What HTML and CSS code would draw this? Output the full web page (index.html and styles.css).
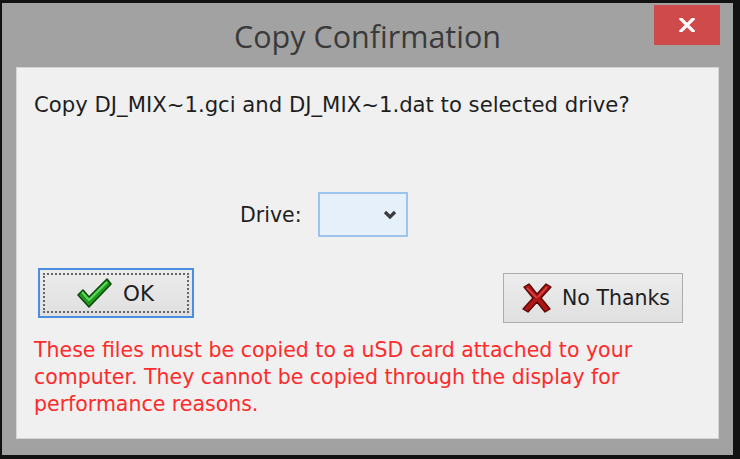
FILE: index.html
```html
<!DOCTYPE html>
<html lang="en">
<head>
    <meta charset="UTF-8">
    <meta name="viewport" content="width=device-width, initial-scale=1.0">
    <title>Copy Confirmation</title>
    <link rel="stylesheet" href="styles.css">
</head>
<body>
    <div class="window">
        <div class="title-bar">
            <div class="title">Copy Confirmation</div>
            <div class="close-btn">
                <svg width="16" height="14" viewBox="0 0 16 14">
                    <path d="M2 1 L14 13 M14 1 L2 13" stroke="#fff" stroke-width="3.2" stroke-linecap="square"/>
                </svg>
            </div>
        </div>

        <div class="panel">
            <p class="question">Copy DJ_MIX~1.gci and DJ_MIX~1.dat to selected drive?</p>

            <div class="drive-row">
                <label class="drive-label">Drive:</label>
                <div class="drive-select">
                    <svg width="14" height="10" viewBox="0 0 14 10">
                        <path d="M2 2 L7 7 L12 2" fill="none" stroke="#3a3a3a" stroke-width="3.2"/>
                    </svg>
                </div>
            </div>

            <div class="button-row">
                <button class="btn btn-ok">
                    <span class="focus-ring">
                        <svg class="icon" width="40" height="34" viewBox="0 0 38 34">
                            <path d="M3 19 L8 14 L14 21 L32 3 L36 8 L14 31 Z" fill="#1f9a1f" stroke="#0b4a0b" stroke-width="1.6" stroke-linejoin="round"/>
                            <path d="M7 16 L14 24 L32 6" fill="none" stroke="#5fd85f" stroke-width="2" stroke-linejoin="round"/>
                        </svg>
                        OK
                    </span>
                </button>
                <button class="btn btn-no">
                    <svg class="icon" width="32" height="30" viewBox="0 0 32 30">
                        <path d="M3 4 L8 1 L16 11 L25 1 L30 4 L20 15 L29 26 L24 29 L16 19 L7 29 L2 26 L12 15 Z" fill="#b01515" stroke="#5a0808" stroke-width="1.4" stroke-linejoin="round"/>
                        <path d="M6 5 L16 15 M26 4 L17 14" fill="none" stroke="#e04848" stroke-width="1.6"/>
                    </svg>
                    No Thanks
                </button>
            </div>

            <p class="warning">These files must be copied to a uSD card attached to your computer. They cannot be copied through the display for performance reasons.</p>
        </div>
    </div>
</body>
</html>
```

FILE: styles.css
```css
* {
    margin: 0;
    padding: 0;
    box-sizing: border-box;
}

body {
    background-color: #121212;
    width: 740px;
    height: 459px;
    overflow: hidden;
    font-family: 'DejaVu Sans', Verdana, sans-serif;
}

.window {
    margin: 3px 0 0 2px;
    width: 731px;
    height: 452px;
    background-color: #a2a2a2;
    padding: 0 14px 16px 14px;
    display: flex;
    flex-direction: column;
}

.title-bar {
    height: 64px;
    position: relative;
    display: flex;
    align-items: center;
    justify-content: center;
}

.title {
    font-family: 'Open Sans', 'Noto Sans', sans-serif;
    font-size: 30.5px;
    color: #3a3a3a;
    padding-top: 1px;
}

.close-btn {
    position: absolute;
    top: 2px;
    right: -1px;
    width: 66px;
    height: 40px;
    background-color: #cf4a4a;
    display: flex;
    align-items: center;
    justify-content: center;
}

.panel {
    flex: 1;
    background-color: #f0f0f0;
    border: 1px solid #d4d4d4;
    padding: 24px 0 0 17px;
    color: #1e1e1e;
}

.question {
    font-size: 21.2px;
    line-height: 25px;
}

.drive-row {
    display: flex;
    align-items: center;
    margin: 75px 0 0 206px;
}

.drive-label {
    font-size: 20.5px;
    margin-right: 16px;
}

.drive-select {
    width: 90px;
    height: 45px;
    border: 2px solid #9cc4ec;
    background-color: #e6f0fb;
    display: flex;
    align-items: center;
    justify-content: flex-end;
    padding-right: 9px;
}

.button-row {
    display: flex;
    justify-content: space-between;
    align-items: flex-start;
    margin: 31px 35px 0 4px;
}

.btn {
    font-family: 'DejaVu Sans', Verdana, sans-serif;
    font-size: 20.5px;
    color: #1e1e1e;
    background: linear-gradient(#ececec, #e0e0e0);
    display: flex;
    align-items: center;
}

.btn-ok {
    width: 156px;
    height: 50px;
    border: 2px solid #4a8ee0;
    padding: 3px;
}

.focus-ring {
    flex: 1;
    height: 100%;
    border: 2px dotted #666;
    display: flex;
    align-items: center;
    padding-left: 29px;
    gap: 9px;
    font-size: 21.5px;
}

.btn-no {
    width: 180px;
    height: 50px;
    margin-top: 5px;
    border: 1px solid #adadad;
    padding-left: 17px;
    gap: 9px;
}

.warning {
    margin-top: 14px;
    font-size: 20.5px;
    line-height: 27px;
    color: #ff2a2a;
    width: 640px;
}
```
